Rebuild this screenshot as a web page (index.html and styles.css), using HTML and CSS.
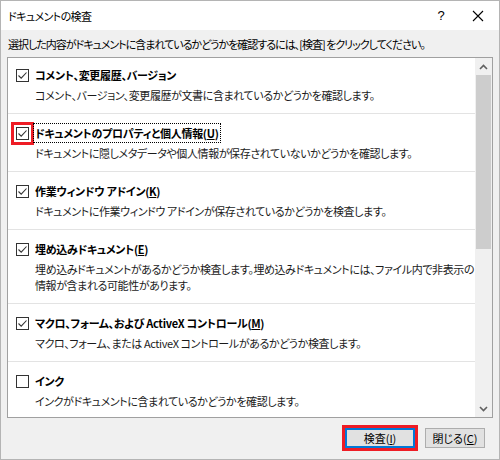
FILE: index.html
```html
<!DOCTYPE html>
<html lang="ja">
<head>
<meta charset="utf-8">
<title>ドキュメントの検査</title>
<link rel="stylesheet" href="styles.css">
</head>
<body>
<div class="win">
  <div class="titlebar">
    <span class="title">ドキュメントの検査</span>
    <span class="help">?</span>
    <span class="close"><svg width="12" height="12" viewBox="0 0 12 12"><path d="M1 1L11 11M11 1L1 11" stroke="#000" stroke-width="1.1" fill="none"/></svg></span>
  </div>
  <div class="content">
    <p class="intro">選択した内容がドキュメントに含まれているかどうかを確認するには、[検査] をクリックしてください。</p>
    <div class="panel">
      <div class="list">
        <div class="item first">
          <div class="head"><span class="cb checked"><svg width="11" height="11" viewBox="0 0 11 11"><path d="M1.5 5.5L4.2 8.2L9.5 2.5" stroke="#333" stroke-width="1.1" fill="none"/></svg></span><span class="label">コメント、変更履歴、バージョン</span></div>
          <div class="desc">コメント、バージョン、変更履歴が文書に含まれているかどうかを確認します。</div>
        </div>
        <div class="item">
          <div class="head"><span class="cb checked marked"><svg width="11" height="11" viewBox="0 0 11 11"><path d="M1.5 5.5L4.2 8.2L9.5 2.5" stroke="#333" stroke-width="1.1" fill="none"/></svg></span><span class="label focus">ドキュメントのプロパティと個人情報(<u>U</u>)</span></div>
          <div class="desc">ドキュメントに隠しメタデータや個人情報が保存されていないかどうかを確認します。</div>
        </div>
        <div class="item">
          <div class="head"><span class="cb checked"><svg width="11" height="11" viewBox="0 0 11 11"><path d="M1.5 5.5L4.2 8.2L9.5 2.5" stroke="#333" stroke-width="1.1" fill="none"/></svg></span><span class="label">作業ウィンドウ アドイン(<u>K</u>)</span></div>
          <div class="desc">ドキュメントに作業ウィンドウ アドインが保存されているかどうかを検査します。</div>
        </div>
        <div class="item">
          <div class="head"><span class="cb checked"><svg width="11" height="11" viewBox="0 0 11 11"><path d="M1.5 5.5L4.2 8.2L9.5 2.5" stroke="#333" stroke-width="1.1" fill="none"/></svg></span><span class="label">埋め込みドキュメント(<u>E</u>)</span></div>
          <div class="desc">埋め込みドキュメントがあるかどうか検査します。埋め込みドキュメントには、ファイル内で非表示の<br>情報が含まれる可能性があります。</div>
        </div>
        <div class="item">
          <div class="head"><span class="cb checked"><svg width="11" height="11" viewBox="0 0 11 11"><path d="M1.5 5.5L4.2 8.2L9.5 2.5" stroke="#333" stroke-width="1.1" fill="none"/></svg></span><span class="label">マクロ、フォーム、および ActiveX コントロール(<u>M</u>)</span></div>
          <div class="desc">マクロ、フォーム、または ActiveX コントロールがあるかどうか検査します。</div>
        </div>
        <div class="item last">
          <div class="head"><span class="cb"></span><span class="label">インク</span></div>
          <div class="desc">インクがドキュメントに含まれているかどうかを確認します。</div>
        </div>
      </div>
      <div class="scrollbar">
        <div class="arrow"><svg width="9" height="6" viewBox="0 0 9 6"><path d="M1 5L4.5 1.5L8 5" stroke="#606060" stroke-width="1.6" fill="none"/></svg></div>
        <div class="track"><div class="thumb"></div></div>
        <div class="arrow"><svg width="9" height="6" viewBox="0 0 9 6"><path d="M1 1L4.5 4.5L8 1" stroke="#606060" stroke-width="1.6" fill="none"/></svg></div>
      </div>
    </div>
    <div class="buttons">
      <button class="btn default">検査(<u>I</u>)</button>
      <button class="btn close-btn">閉じる(<u>C</u>)</button>
    </div>
  </div>
</div>
</body>
</html>
```

FILE: styles.css
```css
html, body {
  margin: 0;
  padding: 0;
  background: #ffffff;
}

body {
  font-family: "Noto Sans CJK JP", "Noto Sans", sans-serif;
  font-size: 11px;
  color: #000;
  font-feature-settings: "palt";
}

.win {
  width: 500px;
  height: 460px;
  box-sizing: border-box;
  border: 1px solid #b4b4b4;
  background: #f0f0f0;
  display: flex;
  flex-direction: column;
}

.titlebar {
  height: 29px;
  background: #ffffff;
  display: flex;
  align-items: center;
  padding-left: 7px;
  flex-shrink: 0;
}

.title {
  flex: 1;
  font-size: 11px;
  letter-spacing: -0.6px;
  line-height: 16px;
}

.help {
  font-size: 13px;
  width: 12px;
  margin-right: 25px;
  text-align: center;
  font-family: "Liberation Sans", sans-serif;
}

.close {
  display: flex;
  align-items: center;
  justify-content: center;
  width: 12px;
  margin-right: 15px;
}

.content {
  flex: 1;
  display: flex;
  flex-direction: column;
  padding: 0 6px 0 6px;
}

.intro {
  margin: 6px 0 5px 1px;
  line-height: 16px;
  letter-spacing: -1px;
  white-space: nowrap;
}

.panel {
  height: 361px;
  box-sizing: border-box;
  border: 1px solid #a0a0a0;
  background: #ffffff;
  display: flex;
  overflow: hidden;
}

.list {
  flex: 1;
  overflow: hidden;
}

.item {
  padding: 11px 0 10px 8px;
  border-bottom: 1px solid #e3e3e3;
}

.item.first {
  padding-top: 9px;
}

.item.last {
  border-bottom: none;
}

.head {
  display: flex;
  align-items: center;
  height: 16px;
  margin-bottom: 4px;
}

.cb {
  width: 13px;
  height: 13px;
  box-sizing: border-box;
  border: 1px solid #333;
  background: #fff;
  display: flex;
  align-items: center;
  justify-content: center;
  margin-right: 6px;
  flex-shrink: 0;
}

.cb.marked {
  outline: 3px solid #ee1c25;
  outline-offset: 2px;
}

.label {
  font-weight: bold;
  line-height: 16px;
  letter-spacing: -0.3px;
  white-space: nowrap;
}

.label.focus {
  outline: 1px dotted #000;
  outline-offset: 1px;
}

.desc {
  padding-left: 19px;
  line-height: 16px;
  letter-spacing: -0.4px;
  color: #1a1a1a;
  white-space: nowrap;
}

.scrollbar {
  width: 17px;
  background: #f0f0f0;
  display: flex;
  flex-direction: column;
  flex-shrink: 0;
}

.arrow {
  height: 17px;
  display: flex;
  align-items: center;
  justify-content: center;
}

.track {
  flex: 1;
  padding: 0 1px;
}

.thumb {
  height: 174px;
  background: #cdcdcd;
}

.buttons {
  display: flex;
  justify-content: flex-end;
  gap: 10px;
  margin-top: 10px;
  padding-right: 8px;
}

.btn {
  font-family: "Noto Sans CJK JP", "Noto Sans", sans-serif;
  font-feature-settings: "palt";
  font-size: 11px;
  height: 20px;
  padding: 0;
  line-height: 16px;
  background: #e1e1e1;
  border: 1px solid #adadad;
  color: #000;
}

.btn.default {
  width: 70px;
  border-color: #0078d7;
  box-shadow: inset 0 0 0 1px #0078d7;
  outline: 3px solid #ee1c25;
  outline-offset: 0;
}

.btn.close-btn {
  width: 60px;
}
```
